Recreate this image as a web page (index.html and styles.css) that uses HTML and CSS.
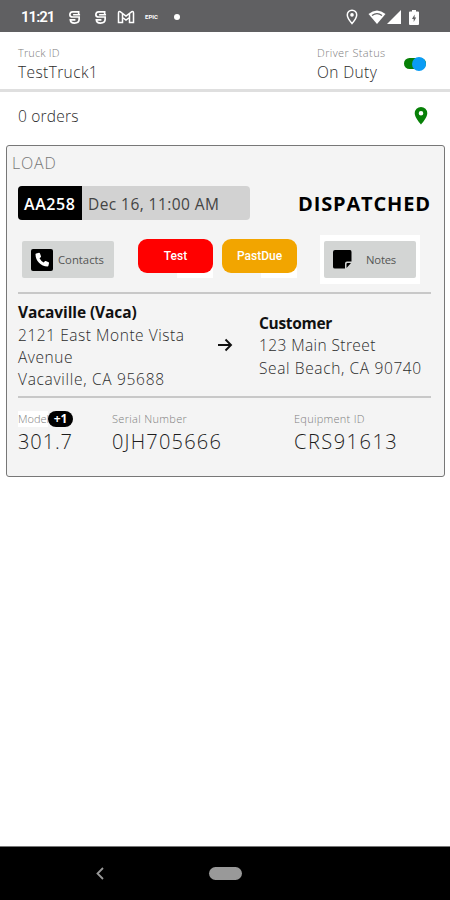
FILE: index.html
```html
<!DOCTYPE html>
<html lang="en">
<head>
<meta charset="utf-8">
<title>Driver load</title>
<link rel="stylesheet" href="styles.css">
</head>
<body>
<header class="status-bar">
  <span class="clock">11:21</span>
  <svg class="st-s" viewBox="0 0 14 16"><path d="M11.500 5V2H5Q2 2 2 5Q2 7.500 5 7.500H12V10Q12 14 7 14Q2.500 14 2.500 10.500H8M5.500 5H13"/></svg>
  <svg class="st-s st-s2" viewBox="0 0 14 16"><path d="M11.500 5V2H5Q2 2 2 5Q2 7.500 5 7.500H12V10Q12 14 7 14Q2.500 14 2.500 10.500H8M5.500 5H13"/></svg>
  <svg class="st-m" viewBox="0 0 18 14"><path d="M1.500 12.500V3Q1.500 1 3.500 1.800L9 6L14.500 1.800Q16.500 1 16.500 3V12.500H12.500V7.500L9 10L5.500 7.500V12.500ZM5.500 12.500V4M12.500 12.500V4"/></svg>
  <span class="epic">EPIC</span>
  <span class="dot"></span>
  <svg class="st-pin" viewBox="0 0 12 16"><path d="M6 1.200A4.600 4.600 0 0 0 1.300 5.900C1.300 9 6 14.500 6 14.500S10.700 9 10.700 5.900A4.600 4.600 0 0 0 6 1.200Z" fill="none" stroke="#fff" stroke-width="1.500"/><circle cx="6" cy="5.900" r="1.800" fill="#fff"/></svg>
  <svg class="st-wifi" viewBox="0 0 18 14"><path d="M9 14L.5 4Q9-3 17.500 4Z" fill="#fff"/><path d="M4 5.400Q9 2 14 5.400" fill="none" stroke="#606062" stroke-width="1.200"/></svg>
  <svg class="st-cell" viewBox="0 0 14 14"><path d="M14 0V14H0Z" fill="#fff"/></svg>
  <svg class="st-bat" viewBox="0 0 10 15"><path d="M3 0H7V1.500H9Q10 1.500 10 2.500V14Q10 15 9 15H1Q0 15 0 14V2.500Q0 1.500 1 1.500H3Z" fill="#fff"/><path d="M5.600 4.500L3 9H4.700V12L7.200 7.600H5.600Z" fill="#606062"/></svg>
</header>

<section class="driver">
  <div class="truck"><div class="label t-truck">Truck ID</div><div class="value t-name">TestTruck1</div></div>
  <div class="duty"><div class="label t-driver">Driver Status</div><div class="value t-duty">On Duty</div></div>
  <div class="toggle"><span class="knob"></span></div>
</section>

<section class="orders">
  <span class="t-orders">0 orders</span>
  <svg class="pin" viewBox="0 0 14 18"><path fill="#078007" fill-rule="evenodd" d="M7 0A6.300 6.300 0 0 0 .7 6.300C.7 11 7 17.500 7 17.500S13.300 11 13.300 6.300A6.300 6.300 0 0 0 7 0ZM7 4A2.300 2.300 0 1 1 7 8.600A2.300 2.300 0 0 1 7 4Z"/></svg>
</section>

<main class="load">
  <div class="load-title">LOAD</div>
  <div class="summary">
    <div class="trip"><b class="code"><span>AA258</span></b><span class="date">Dec 16, 11:00 AM</span></div>
    <b class="state">DISPATCHED</b>
  </div>
  <div class="actions">
    <div class="btn contacts">
      <svg class="phone" viewBox="0 0 22 22"><rect width="22" height="22" rx="2"/><path fill="#fff" d="M5.200 4.500L8 3.800Q8.600 3.700 8.900 4.300L10 7.200Q10.200 7.800 9.700 8.200L8.500 9.300Q9.900 12 12.700 13.500L13.800 12.200Q14.200 11.700 14.800 12L17.600 13.200Q18.200 13.500 18 14.200L17.400 16.800Q17.200 17.500 16.500 17.500C9.800 17.500 4.500 12 4.500 5.300Q4.500 4.700 5.200 4.500Z"/></svg>
      <span class="t-contacts">Contacts</span>
    </div>
    <div class="chip test"><span>Test</span></div>
    <div class="chip due"><span>PastDue</span></div>
    <div class="notes-wrap"><div class="btn notes">
      <svg class="note" viewBox="0 0 19 19"><path d="M2 0H17Q18.500 0 18.500 2V11.500H14Q12 11.500 12 13.500V18.500H2Q0 18.500 0 17V2Q0 0 2 0ZM13.500 18V14Q13.500 13 14.500 13H18Z"/></svg>
      <span class="t-notes">Notes</span>
    </div></div>
  </div>
  <div class="route">
    <div class="from"><b class="r1">Vacaville (Vaca)</b><span class="r2">2121 East Monte Vista</span><span class="r3">Avenue</span><span class="r4">Vacaville, CA 95688</span></div>
    <svg class="arrow" viewBox="0 0 16 14"><path d="M1 7H14M8.500 1.500L14 7L8.500 12.500" fill="none" stroke="#111" stroke-width="1.900"/></svg>
    <div class="to"><b class="r5">Customer</b><span class="r6">123 Main Street</span><span class="r7">Seal Beach, CA 90740</span></div>
  </div>
  <div class="equipment">
    <div class="eq model"><div class="label"><span class="model-label">Model</span><b class="badge">+1</b></div><div class="big e1">301.7</div></div>
    <div class="eq serial"><div class="label t-serial">Serial Number</div><div class="big e2">0JH705666</div></div>
    <div class="eq"><div class="label t-equip">Equipment ID</div><div class="big e3">CRS91613</div></div>
  </div>
</main>

<footer class="nav-bar">
  <svg class="back" viewBox="0 0 8 13"><path d="M7 1L1.500 6.500L7 12" fill="none" stroke="#999" stroke-width="1.800"/></svg>
  <span class="home"></span>
</footer>
</body>
</html>
```
FILE: styles.css
```css
* { box-sizing: border-box; }
body {
  margin: 0;
  width: 450px;
  height: 900px;
  display: flex;
  flex-direction: column;
  overflow: hidden;
  background: #fff;
  color: #2c2c2c;
  font: 300 15.5px/22px "Open Sans", "Noto Sans", sans-serif;
  white-space: nowrap;
}
svg { display: block; flex: none; }

.status-bar { height: 32px; flex: none; background: #606062; display: flex; align-items: center; padding: 2px 31px 0 21px; }
.clock { width: 47px; color: #fff; font: 600 15px/20px Roboto, sans-serif; letter-spacing: -1px; }
.st-s { width: 13px; height: 15px; fill: none; stroke: #fff; stroke-width: 1.800; }
.st-s2 { margin-left: 13px; }
.st-m { width: 18px; height: 14px; margin-left: 10px; fill: none; stroke: #fff; stroke-width: 1.500; }
.epic { width: 14px; margin-left: 10px; color: #fff; font: 700 6px/8px Roboto, sans-serif; }
.dot { width: 6px; height: 6px; margin-left: 15px; border-radius: 50%; background: #fff; }
.st-pin { width: 12px; height: 16px; margin-left: auto; }
.st-wifi { width: 18px; height: 14px; margin-left: 10px; }
.st-cell { width: 14px; height: 14px; margin-left: 1px; }
.st-bat { width: 10px; height: 15px; margin-left: 8px; }

.label { color: #808080; font-size: 11px; line-height: 16px; }
.value { line-height: 23px; }
.t-truck { letter-spacing: .15px; }
.t-driver { letter-spacing: .38px; }
.t-name { letter-spacing: .4px; }
.t-duty { letter-spacing: .4px; }
.t-orders { letter-spacing: .2px; }
.driver { height: 60px; flex: none; display: flex; padding: 13px 24px 0 18px; border-bottom: 3px solid #dfdfdf; }
.truck { width: 299px; }
.duty { width: 87px; }
.toggle { width: 22px; height: 11px; margin-top: 13px; border-radius: 6px; background: #078007; display: flex; align-items: center; justify-content: flex-end; }
.knob { width: 14px; height: 14px; flex: none; border-radius: 50%; background: #0a9cf5; }
.orders { height: 53px; flex: none; display: flex; align-items: center; justify-content: space-between; padding: 0 22px 6px 18px; }
.pin { width: 14px; height: 18px; }

.load { width: 439px; height: 332px; flex: none; margin-left: 6px; border: 1px solid #777; border-radius: 3px; background: #f4f4f4; padding: 6px 13px 0 11px; }
.load-title { height: 34px; margin-left: -6px; color: #777; font-size: 16px; letter-spacing: .8px; }
.summary { height: 34px; display: flex; justify-content: space-between; align-items: center; }
.trip { width: 232px; height: 34px; display: flex; align-items: center; border-radius: 4px; background: #d2d2d2; overflow: hidden; }
.code { width: 64px; height: 34px; padding-left: 6px; background: #000; color: #fff; font-size: 16px; font-weight: 600; line-height: 36px; letter-spacing: .6px; }
.date { margin: 1px 0 0 6px; font-weight: 400; color: #444; letter-spacing: .43px; }
.state { margin-top: 2px; color: #000; font-size: 20px; font-weight: 700; width: 133px; letter-spacing: .85px; }
.actions { height: 74px; display: flex; padding: 15px 11px 0 4px; border-bottom: 2px solid #c8c8c8; }
.btn { width: 92px; height: 37px; border-radius: 2px; background: #d3d5d4; display: flex; align-items: center; font-size: 11.3px; font-weight: 400; color: #555; }
.contacts { margin-top: 6px; padding-left: 9px; gap: 5px; }
.phone { width: 22px; height: 22px; }
.chip { position: relative; width: 75px; height: 34px; margin-top: 4px; border-radius: 9px; color: #fff; font: 500 12px/34px Roboto, sans-serif; text-align: center; }
.load { position: relative; z-index: 0; }
.chip::after { content: ""; position: absolute; z-index: -1; right: 0; bottom: -5px; width: 36px; height: 14px; background: #fff; }
.test { margin-left: 24px; background: #f00; }
.due { margin-left: 9px; background: #f2a500; }
.notes-wrap { width: 100px; height: 49px; flex: none; margin-left: 23px; padding: 6px 4px; background: #fff; }
.notes { padding-left: 9px; gap: 14px; }
.t-notes { letter-spacing: -.2px; }
.note { width: 19px; height: 19px; }

.route { height: 104px; display: flex; align-items: center; padding-bottom: 1px; border-bottom: 2px solid #c8c8c8; }
.route b, .route span { display: block; height: 22.3px; }
.route b { color: #111; font-weight: 700; }
.from { width: 199px; padding-top: 3px; }
.arrow { width: 16px; height: 14px; margin-top: 1px; }
.to { margin-left: 26px; padding-top: 2px; }
.r1 { letter-spacing: -.1px; }
.r2 { letter-spacing: .55px; }
.r3 { letter-spacing: .55px; }
.r4 { letter-spacing: .7px; }
.r5 { letter-spacing: -.3px; }
.r6 { letter-spacing: .4px; }
.r7 { letter-spacing: .63px; }
.equipment { display: flex; padding-top: 13px; }
.eq { width: 94px; }
.serial { width: 182px; }
.t-serial { letter-spacing: .32px; }
.t-equip { letter-spacing: .27px; }
.model .label { display: flex; align-items: center; }
.model-label { width: 30px; overflow: hidden; background: #fff; }
.badge { width: 25px; height: 16px; border-radius: 8px; background: #000; color: #fff; font-size: 12px; font-weight: 700; line-height: 15px; text-align: center; }
.big { color: #1c1c1c; font-size: 20px; line-height: 30px; }
.e1 { letter-spacing: .9px; }
.e2 { letter-spacing: 1.2px; }
.e3 { letter-spacing: 1.5px; }

.nav-bar { height: 54px; flex: none; margin-top: auto; display: flex; align-items: center; padding-left: 96px; background: #000; border-top: 1px solid #777; }
.back { width: 8px; height: 13px; }
.home { width: 33px; height: 13px; margin-left: 105px; border-radius: 7px; background: #999; }
```
